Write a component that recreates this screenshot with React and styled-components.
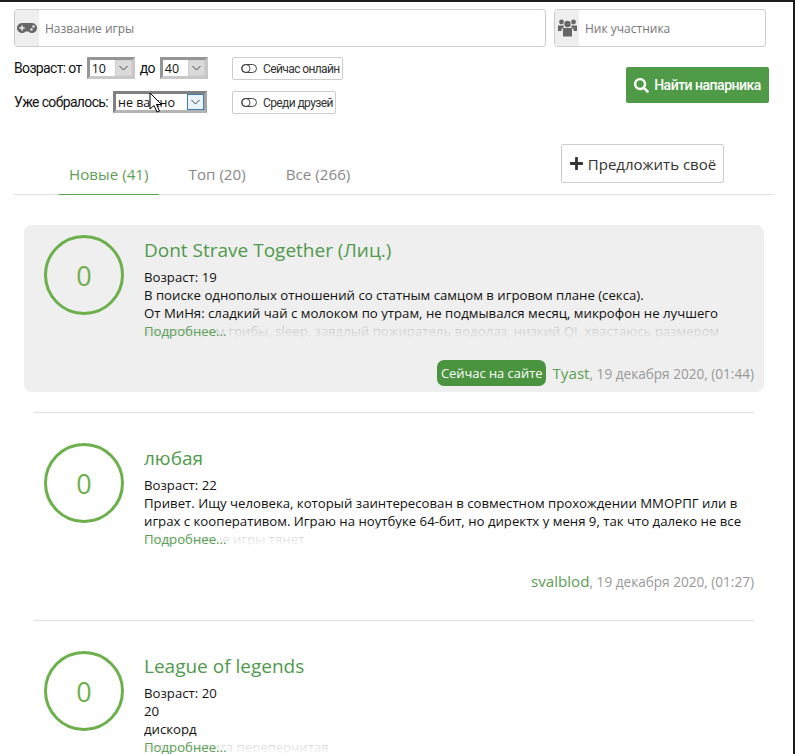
import React from 'react'
import styled, { createGlobalStyle } from 'styled-components'
import { FaGamepad, FaSearch, FaPlus } from 'react-icons/fa'

const GlobalStyle = createGlobalStyle`
  html, body {
    margin: 0;
    padding: 0;
    background: #fff;
  }
  body {
    font-family: "Open Sans", "Noto Sans", sans-serif;
    font-size: 13px;
    color: #111;
  }
`

const Page = styled.div`
  position: relative;
  box-sizing: border-box;
  width: 795px;
  height: 754px;
  overflow: hidden;
  border-top: 2px solid #1c1c1c;
  border-right: 2px solid #1c1c1c;
`

const SearchForm = styled.div`
  padding: 7px 0 0 14px;
  width: 755px;
`

const InputsRow = styled.div`
  display: flex;
  gap: 8px;
`

const InputBox = styled.div`
  box-sizing: border-box;
  display: flex;
  align-items: center;
  width: ${(p) => p.width}px;
  height: 38px;
  border: 1px solid #ccc;
  border-radius: 3px;
`

const InputIcon = styled.div`
  display: flex;
  align-items: center;
  justify-content: center;
  width: 24px;
  height: 36px;
  background: #eee;
  color: #666;
  font-size: 20px;
`

const Placeholder = styled.span`
  margin-left: 6px;
  font-size: 12px;
  color: #777;
`

const FiltersRow = styled.div`
  display: flex;
  justify-content: space-between;
  padding-top: 10px;
`

const Filters = styled.div`
  display: grid;
  grid-template-columns: 218px auto;
  row-gap: 11px;
`

const FilterLine = styled.div`
  display: flex;
  align-items: center;
  gap: 5px;
  height: 22px;
  font-family: "Roboto", sans-serif;
  font-size: 14px;
  letter-spacing: -0.65px;
  color: #111;
`

const SelectBox = styled.div`
  box-sizing: border-box;
  display: flex;
  align-items: center;
  justify-content: space-between;
  width: ${(p) => p.width}px;
  height: 22px;
  background: #fff;
  border: 3px solid;
  border-color: ${(p) => (p.focused ? '#808080 #a4a4a4 #b4b4b4 #808080' : '#959595 #c8c8c8 #c8c8c8 #959595')};
  padding-left: 2px;
  font-family: "Open Sans", sans-serif;
  font-size: 12.5px;
  letter-spacing: 0;
`

const SelectArrow = styled.span`
  box-sizing: border-box;
  display: flex;
  align-items: center;
  justify-content: center;
  width: 17px;
  height: 16px;
  background: ${(p) => (p.focused ? '#e8f3fb' : '#dadada')};
  border: 1px solid ${(p) => (p.focused ? '#3c7fb1' : '#d0d0d0')};
`

const ToggleButton = styled.div`
  box-sizing: border-box;
  display: inline-flex;
  align-items: center;
  gap: 6px;
  height: 23px;
  padding: 0 2px 0 8px;
  border: 1px solid #ccc;
  border-radius: 2px;
  font-family: "Roboto", sans-serif;
  font-size: 12px;
  letter-spacing: -0.6px;
  color: #333;
`

const FindButton = styled.div`
  display: flex;
  align-items: center;
  justify-content: center;
  gap: 5px;
  width: 143px;
  height: 36px;
  margin-top: 10px;
  background: #4e9a47;
  border-radius: 2px;
  color: #fff;
  font-family: "Roboto", sans-serif;
  font-size: 14px;
  font-weight: 500;
  letter-spacing: -0.5px;
  svg {
    font-size: 15px;
  }
`

const TabsBar = styled.div`
  display: flex;
  align-items: flex-end;
  justify-content: space-between;
  box-sizing: border-box;
  width: 760px;
  height: 49px;
  margin: 32px 0 0 14px;
  border-bottom: 1px solid #ddd;
`

const Tabs = styled.div`
  display: flex;
  margin-left: 45px;
`

const Tab = styled.div`
  box-sizing: border-box;
  height: 30px;
  padding: 0 10px;
  margin-right: 20px;
  margin-bottom: -1px;
  border-bottom: 1px solid ${(p) => (p.active ? '#5ba351' : 'transparent')};
  font-size: 15.2px;
  line-height: 18px;
  color: ${(p) => (p.active ? '#5f9e56' : '#888')};
`

const SuggestButton = styled.div`
  box-sizing: border-box;
  display: flex;
  align-items: center;
  justify-content: center;
  gap: 4px;
  width: 163px;
  height: 39px;
  margin: 0 50px 11px 0;
  border: 1px solid #ccc;
  border-radius: 2px;
  font-size: 15px;
  color: #333;
`

const List = styled.div`
  padding: 30px 29px 0 24px;
`

const Card = styled.div`
  box-sizing: border-box;
  display: flex;
  gap: 20px;
  height: 167px;
  padding: 10px 10px 0 20px;
  background: ${(p) => (p.highlight ? '#efefef' : 'transparent')};
  border-radius: 8px;
`

const Rating = styled.div`
  box-sizing: border-box;
  flex: none;
  display: flex;
  align-items: center;
  justify-content: center;
  width: 80px;
  height: 80px;
  border: 3.5px solid #6cb04c;
  border-radius: 50%;
  font-size: 27px;
  color: #6cb04c;
`

const CardBody = styled.div`
  flex: 1;
  min-width: 0;
`

const Title = styled.div`
  font-size: 19px;
  line-height: 30px;
  color: #4f9a4c;
`

const Description = styled.div`
  position: relative;
  height: 72px;
  margin-top: 3px;
  overflow: hidden;
  font-size: 13.2px;
  line-height: 18px;
  white-space: nowrap;
  color: #111;
`

const Fade = styled.div`
  position: absolute;
  left: 0;
  right: 0;
  bottom: 0;
  height: 20px;
  background: linear-gradient(to bottom, ${(p) => (p.highlight ? 'rgba(239,239,239,0.7), #efefef' : 'rgba(255,255,255,0.7), #fff')});
`

const More = styled.span`
  position: absolute;
  left: 0;
  bottom: 0;
  line-height: 18px;
  color: #5aa053;
`

const CardFooter = styled.div`
  display: flex;
  align-items: center;
  justify-content: flex-end;
  gap: 6px;
  height: 26px;
  margin-top: 20px;
  font-size: 13.6px;
`

const OnlineBadge = styled.span`
  padding: 0 4px;
  line-height: 26px;
  background: #4a9440;
  border-radius: 7px;
  color: #fff;
  font-size: 12.9px;
`

const Author = styled.span`
  color: #999;
`

const AuthorName = styled.span`
  font-size: 15.2px;
  color: #5c9e52;
`

const Divider = styled.div`
  height: 1px;
  margin: 20px 10px;
  background: #ddd;
`

const CursorMark = styled.svg`
  position: absolute;
  left: 149px;
  top: 90px;
`

const ToggleIcon = () => (
  <svg width="16" height="9" viewBox="0 0 16 9" fill="none" stroke="#444">
    <rect x="0.5" y="0.5" width="15" height="8" rx="4" />
    <circle cx="5" cy="4.5" r="4" />
  </svg>
)

const Chevron = () => (
  <svg width="9" height="6" viewBox="0 0 9 6" fill="none" stroke="#444" strokeWidth="1">
    <path d="M0.5 1 L4.5 5 L8.5 1" />
  </svg>
)

const UsersIcon = () => (
  <svg width="19" height="18" viewBox="0 0 19 18" fill="currentColor">
    <circle cx="3.5" cy="3" r="2.4" />
    <circle cx="15.5" cy="3" r="2.4" />
    <circle cx="9.5" cy="5" r="3.2" />
    <path d="M0 6.5 H6 L5 9.5 H3.5 V12 H0 Z" />
    <path d="M19 6.5 H13 L14 9.5 H15.5 V12 H19 Z" />
    <path d="M5 9 H14 V17.5 H5 Z" />
  </svg>
)

const cards = [
  {
    title: 'Dont Strave Together (Лиц.)',
    highlight: true,
    online: true,
    author: 'Tyast',
    date: '19 декабря 2020, (01:44)',
    lines: [
      'Возраст: 19',
      'В поиске однополых отношений со статным самцом в игровом плане (секса).',
      'От МиНя: сладкий чай с молоком по утрам, не подмывался месяц, микрофон не лучшего',
      'качества, ем грибы, sleep, заядлый пожиратель водолаз, низкий QI, хвастаюсь размером',
    ],
  },
  {
    title: 'любая',
    author: 'svalblod',
    date: '19 декабря 2020, (01:27)',
    lines: [
      'Возраст: 22',
      'Привет. Ищу человека, который заинтересован в совместном прохождении ММОРПГ или в',
      'играх с кооперативом. Играю на ноутбуке 64-бит, но директх у меня 9, так что далеко не все',
      'самые новые игры тянет',
    ],
  },
  {
    title: 'League of legends',
    lines: ['Возраст: 20', '20', 'дискорд', 'дота или лига переперчитая'],
  },
]

const App = () => (
  <Page>
    <GlobalStyle />
    <SearchForm>
      <InputsRow>
        <InputBox width={532}>
          <InputIcon><FaGamepad /></InputIcon>
          <Placeholder>Название игры</Placeholder>
        </InputBox>
        <InputBox width={212}>
          <InputIcon><UsersIcon /></InputIcon>
          <Placeholder>Ник участника</Placeholder>
        </InputBox>
      </InputsRow>
      <FiltersRow>
        <Filters>
          <FilterLine>
            Возраст: от
            <SelectBox width={48}>10<SelectArrow><Chevron /></SelectArrow></SelectBox>
            до
            <SelectBox width={48}>40<SelectArrow><Chevron /></SelectArrow></SelectBox>
          </FilterLine>
          <div><ToggleButton><ToggleIcon />Сейчас онлайн</ToggleButton></div>
          <FilterLine>
            Уже собралось:
            <SelectBox width={94} focused>не важно<SelectArrow focused><Chevron /></SelectArrow></SelectBox>
          </FilterLine>
          <div><ToggleButton><ToggleIcon />Среди друзей</ToggleButton></div>
        </Filters>
        <FindButton><FaSearch />Найти напарника</FindButton>
      </FiltersRow>
    </SearchForm>
    <TabsBar>
      <Tabs>
        <Tab active>Новые (41)</Tab>
        <Tab>Топ (20)</Tab>
        <Tab>Все (266)</Tab>
      </Tabs>
      <SuggestButton><FaPlus />Предложить своё</SuggestButton>
    </TabsBar>
    <List>
      {cards.map((card, i) => (
        <React.Fragment key={card.title}>
          {i > 0 && <Divider />}
          <Card highlight={card.highlight}>
            <Rating>0</Rating>
            <CardBody>
              <Title>{card.title}</Title>
              <Description>
                {card.lines.map((line) => <div key={line}>{line}</div>)}
                <Fade highlight={card.highlight} />
                <More>Подробнее...</More>
              </Description>
              {card.author && (
                <CardFooter>
                  {card.online && <OnlineBadge>Сейчас на сайте</OnlineBadge>}
                  <Author><AuthorName>{card.author}</AuthorName>, {card.date}</Author>
                </CardFooter>
              )}
            </CardBody>
          </Card>
        </React.Fragment>
      ))}
    </List>
    <CursorMark width="14" height="22" viewBox="0 0 14 22">
      <path d="M1 1 L1 17 L5 13.5 L8 20 L10.5 19 L7.5 12.5 L12.5 12.5 Z" fill="#fff" stroke="#000" strokeWidth="1" />
    </CursorMark>
  </Page>
)

export default App
